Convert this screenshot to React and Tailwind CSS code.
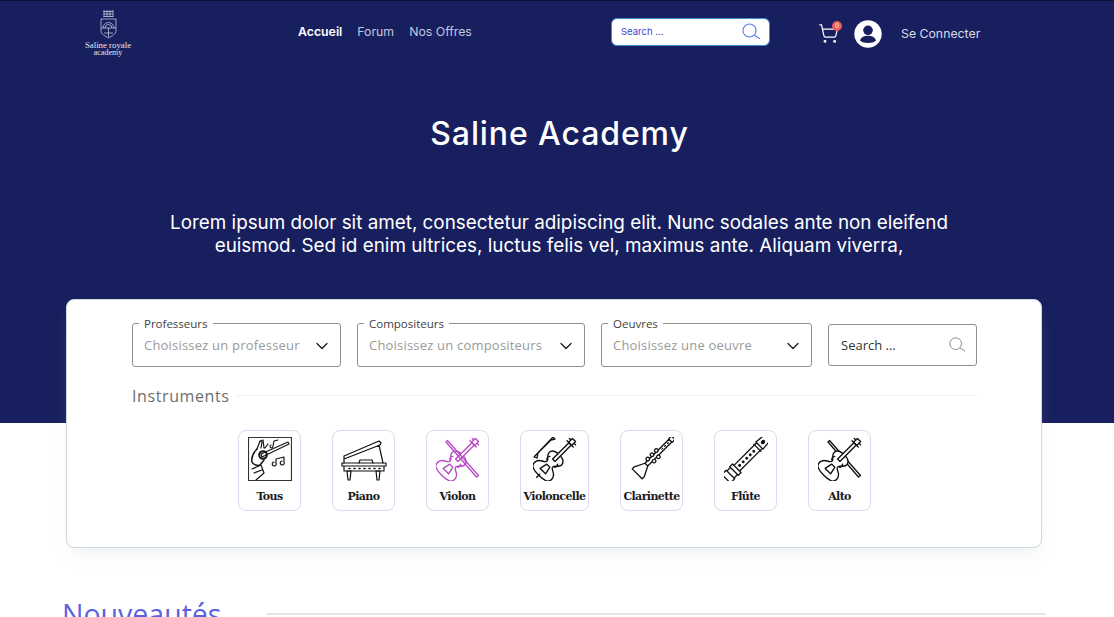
import { ChevronDown, ShoppingCart } from 'lucide-react';

function Logo() {
  return (
    <div className="w-[46px] flex flex-col items-center text-white font-['Liberation_Serif',serif]">
      <svg width="18" height="30" viewBox="0 0 18 30" fill="none" stroke="#d7daea" strokeWidth="0.7">
        <path d="M5 1v7M8 1v7M11 1v7M14 1v7M4.500 2.500h9.500M4.500 5h9.500M4.500 7.500h9.500" />
        <path d="M2 10h15v12c0 3-4 5-7.500 7C6 27 2 25 2 22z" />
        <path d="M4 19a5.500 5.500 0 0 1 11 0M6 19a3.500 3.500 0 0 1 7 0M2 19h15M9.500 19v9M5 24l9 0" />
      </svg>
      <span className="text-[8.800px] leading-[7px] mt-[3px] whitespace-nowrap text-[#e6e7f0]">Saline royale</span>
      <span className="text-[8px] leading-[7px] whitespace-nowrap text-[#e6e7f0]">academy</span>
    </div>
  );
}

function SearchGlyph({ color, size = 20 }) {
  return (
    <svg width={size} height={size} viewBox="0 0 20 20" fill="none" stroke={color} strokeWidth="1.100">
      <circle cx="8.500" cy="8.500" r="6.500" />
      <path d="M13.300 13.200l5.700 3.600" />
    </svg>
  );
}

function Header() {
  return (
    <header className="h-[67px] flex items-center border-t border-[#0d1130] font-['Inter',sans-serif]">
      <div className="w-[62px] shrink-0" />
      <div className="w-[236px] shrink-0 ml-[23px] -mt-[3px]"><Logo /></div>
      <nav className="-ml-[23px] w-[174px] flex gap-[15px] text-[12.300px] text-[#c3c6dc] -mt-[4px] shrink-0">
        <a className="font-semibold text-white">Accueil</a>
        <a>Forum</a>
        <a>Nos Offres</a>
      </nav>
      <div className="ml-[139px] w-[159px] h-[28px] shrink-0 -mt-[4px] rounded-md bg-white border border-[#3d8fd6] flex items-center justify-between pl-[9px] pr-[8px]">
        <span className="text-[9.500px] text-[#3c48c8]">Search ...</span>
        <SearchGlyph color="#5d78e8" />
      </div>
      <div className="relative ml-[48px] shrink-0 -mt-[2px]">
        <ShoppingCart size={21} strokeWidth={1.400} className="text-white" />
        <span className="absolute -top-[2px] right-[-3px] w-[10px] h-[10px] rounded-full bg-[#ee5a5a] text-white text-[6.500px] leading-[10px] text-center">0</span>
      </div>
      <svg className="ml-[15px] shrink-0 -mt-[1px]" width="28" height="28" viewBox="0 0 28 28">
        <circle cx="14" cy="14" r="13.700" fill="#fff" />
        <circle cx="14" cy="10.300" r="4.800" fill="#181f5e" />
        <path d="M6 20.500c1-3.500 4.500-4.700 8-4.700s7 1.200 8 4.700c-2 1.800-5 2.500-8 2.500s-6-.7-8-2.500z" fill="#181f5e" />
      </svg>
      <a className="ml-[19px] text-[12.300px] text-[#d9dbe8]">Se Connecter</a>
    </header>
  );
}

function Select({ label, placeholder, width }) {
  return (
    <fieldset className={`${width} h-[49px] -mt-[6px] border border-[#8f8f8f] rounded-[3px] pl-[6px] pr-[8px] shrink-0`}>
      <legend className="px-[5px] text-[11.500px] leading-[11px] text-[#3f3f3f] font-['Open_Sans',sans-serif]">{label}</legend>
      <div className="flex items-center justify-between h-[34px] pl-[5px]">
        <span className="text-[13px] text-[#9a9a9a] tracking-[0.2px] whitespace-nowrap font-['Open_Sans',sans-serif]">{placeholder}</span>
        <ChevronDown size={20} strokeWidth={1.500} className="text-[#1c1c1c]" />
      </div>
    </fieldset>
  );
}

function Fiddle({ color, cello, bowOnTop }) {
  const bow = <path d="M10 5l1.500-1.500 31 35-2 1.500z" fill="none" />;
  return (
    <svg width="44" height="44" viewBox="0 0 44 44" fill="none" stroke={color} strokeWidth="1.300" strokeLinejoin="round" strokeLinecap="round">
      {!cello && !bowOnTop && bow}
      {cello && <path d="M1 20L20 0l2 2-4 1L5 16l-1 5z" />}
      <g transform="translate(20 24) rotate(45) scale(1.100)" strokeWidth="1.250">
        <path d="M0-8C-5-8-8-6-8-3c0 3 3 4 4 6 1 2-1 3-3 4-4 2-5 6-3 9 3 3 17 3 20 0 2-3 1-7-3-9-2-1-4-2-3-4 1-2 4-3 4-6 0-3-3-5-8-5z" fill="#fff" />
        <path d="M-1.500-22h3v21h-3zM-2 6h4l1.500 7h-7z" fill="#fff" />
        <path d="M-2-27h4v5h-4zM-4-25h2M2-25h2M-4-22h2M2-22h2" />
        <path d="M-5-1c-1 1-1 3 0 4M5-1c1 1 1 3 0 4" />
        {cello && <path d="M0 17v4" />}
      </g>
      {bowOnTop && bow}
    </svg>
  );
}

function Conductor() {
  return (
    <svg width="44" height="44" viewBox="0 0 44 44" fill="none" stroke="#151515" strokeWidth="1.200" strokeLinejoin="round" strokeLinecap="round">
      <rect x="0.500" y="0.500" width="43" height="43" stroke="#333" />
      <path d="M13 17L40 5l1 2-27 13z" />
      <circle cx="15" cy="18" r="3.800" strokeWidth="2" />
      <path d="M9 12L12 4l2 1-1 6M12 4l3-1 1 8M17 11l3-4" />
      <path d="M9 12C5 16 3 20 4 25c1 3 6 4 8 3l4-5" strokeWidth="1.500" />
      <path d="M4 32l9-4 3 8-8 7M6 36l8-3" />
      <path d="M25 9l1-5 4-1M25 9a1.500 1.500 0 1 1-2-1" />
      <path d="M28 26v-4l8-2v5M28 26a2 2 0 1 1-2-1M36 25a2 2 0 1 1-2-1" />
    </svg>
  );
}

function Piano() {
  return (
    <svg width="46" height="44" viewBox="0 0 46 44" fill="none" stroke="#111" strokeWidth="1.200" strokeLinejoin="round" strokeLinecap="round">
      <path d="M3 19L38 4l2 2-1 2-36 14M3 19v7M38 8l4 18" />
      <path d="M18 26l1-3h12l1 3" />
      <path d="M1 26h44v3H1zM3 29h40v5H3z" />
      <path d="M8 31.500h1M13 31.500h1M18 31.500h1M23 31.500h1M28 31.500h1M33 31.500h1M38 31.500h1" strokeWidth="1.600" />
      <path d="M6 34h4l-1 9H7zM35 34h4l-1 9h-2z" />
    </svg>
  );
}

function Clarinet() {
  return (
    <svg width="44" height="44" viewBox="0 0 44 44" fill="none" stroke="#111" strokeWidth="1.300" strokeLinejoin="round" strokeLinecap="round">
      <g transform="translate(22 22) rotate(45)">
        <path d="M-2.500-30h5v4h-5zM-2-26h4v34h-4zM-2 8L-7 18v3H7v-3L2 8z" fill="#fff" />
        <path d="M0-23v1M0-19v1M0-15v1" />
        <circle cx="-3" cy="-9" r="1.800" fill="#fff" />
        <circle cx="3" cy="-6" r="1.800" fill="#fff" />
        <circle cx="-3" cy="-3" r="1.800" fill="#fff" />
        <circle cx="3" cy="0" r="1.800" fill="#fff" />
        <circle cx="-3" cy="3" r="1.800" fill="#fff" />
      </g>
    </svg>
  );
}

function Flute() {
  return (
    <svg width="44" height="44" viewBox="0 0 44 44" fill="none" stroke="#111" strokeWidth="1.300" strokeLinejoin="round" strokeLinecap="round">
      <g transform="translate(22 22) rotate(45)">
        <path d="M-4-30c1-2 7-2 8 0l1 11h-10zM-4-19h8v32h-8zM-6 13h12v4H-6zM-5 17h10v5H-5zM-6 22h12v6H-6z" fill="#fff" />
        <path d="M-5-16h10" />
        <ellipse cx="0" cy="-24" rx="1.300" ry="1.700" fill="#111" />
        <circle cx="0" cy="-11" r="0.800" fill="#111" />
        <circle cx="0" cy="-6" r="0.800" fill="#111" />
        <circle cx="0" cy="-1" r="0.800" fill="#111" />
        <circle cx="0" cy="4" r="0.800" fill="#111" />
        <circle cx="0" cy="9" r="0.800" fill="#111" />
      </g>
    </svg>
  );
}

const instruments = [
  { name: 'Tous', icon: <Conductor />, w: 'w-[63px]' },
  { name: 'Piano', icon: <Piano />, w: 'w-[63px]' },
  { name: 'Violon', icon: <Fiddle color="#b84ac6" bowOnTop />, w: 'w-[63px]' },
  { name: 'Violoncelle', icon: <Fiddle color="#111" cello />, w: 'w-[69px]' },
  { name: 'Clarinette', icon: <Clarinet />, w: 'w-[63px]' },
  { name: 'Flûte', icon: <Flute />, w: 'w-[63px]' },
  { name: 'Alto', icon: <Fiddle color="#111" />, w: 'w-[63px]' },
];

function InstrumentCard({ item }) {
  return (
    <div className={`${item.w} h-[81px] border border-[#dcd9f0] rounded-[8px] flex flex-col items-center pt-[6px] bg-white shrink-0`}>
      {item.icon}
      <span className="mt-[8px] text-[11px] leading-[16px] font-bold text-[#1c1c1c] font-['DejaVu_Serif',serif] tracking-[-0.6px] whitespace-nowrap">{item.name}</span>
    </div>
  );
}

function FilterCard() {
  return (
    <section className="relative ml-[66px] w-[976px] h-[249px] -mt-[124px] bg-white border border-[#cfd6dc] rounded-[8px] shadow-[0_10px_18px_-8px_rgba(170,190,200,0.3)] px-[65px] pt-[24px]">
      <div className="flex gap-[16px] w-[846px]">
        <Select label="Professeurs" placeholder="Choisissez un professeur" width="w-[209px]" />
        <Select label="Compositeurs" placeholder="Choisissez un compositeurs" width="w-[228px]" />
        <Select label="Oeuvres" placeholder="Choisissez une oeuvre" width="w-[211px]" />
        <div className="w-[149px] h-[42px] shrink-0 border border-[#8f8f8f] rounded-[3px] flex items-center justify-between pl-[12px] pr-[10px]">
          <span className="text-[13px] text-[#333] font-['Open_Sans',sans-serif] translate-y-[1px]">Search ...</span>
          <SearchGlyph color="#8a8a8a" size={18} />
        </div>
      </div>
      <div className="flex items-center gap-[7px] mt-[20px] w-[845px]">
        <span className="text-[16px] leading-[20px] text-[#6e6e6e] tracking-[0.6px] font-['Open_Sans',sans-serif] -mt-[1px]">Instruments</span>
        <div className="flex-1 h-px bg-[#efefef] -mt-[3px]" />
      </div>
      <div className="flex justify-center gap-[31px] mt-[24px] w-[845px]">
        {instruments.map((item) => (
          <InstrumentCard key={item.name} item={item} />
        ))}
      </div>
    </section>
  );
}

export default function App() {
  return (
    <div className="h-[617px] overflow-hidden bg-white">
      <div className="h-[423px] bg-[#181f5e] text-white">
        <Header />
        <h1 className="mt-[45px] pl-[5px] text-center text-[32px] leading-[44px] font-medium tracking-[0.9px] font-['Inter',sans-serif]">Saline Academy</h1>
        <p className="mt-[55px] w-[800px] ml-[159px] text-center text-[18.850px] leading-[23px] font-['Inter',sans-serif]">
          Lorem ipsum dolor sit amet, consectetur adipiscing elit. Nunc sodales ante non eleifend euismod. Sed id enim ultrices, luctus felis vel, maximus ante. Aliquam viverra,
        </p>
      </div>
      <FilterCard />
      <div className="flex items-center mt-[47px] pl-[62px] w-[1046px]">
        <h2 className="w-[205px] text-[28.500px] leading-[38px] text-[#5a62de] font-['Open_Sans',sans-serif] shrink-0">Nouveautés</h2>
        <div className="flex-1 h-[2px] bg-[#e3e5ec]" />
      </div>
    </div>
  );
}
